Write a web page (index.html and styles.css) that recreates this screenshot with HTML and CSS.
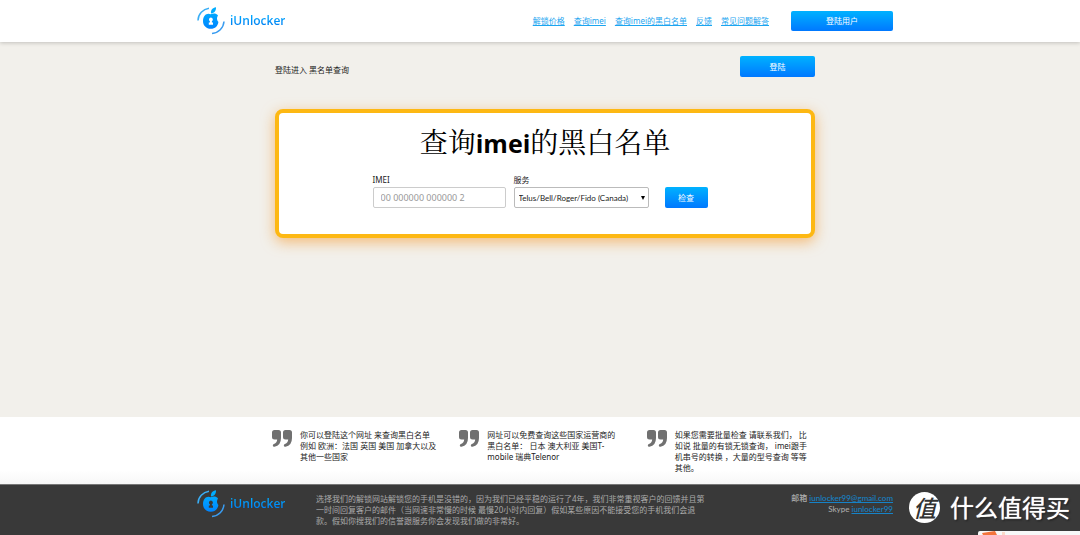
FILE: index.html
```html
<!DOCTYPE html>
<html lang="zh-CN">
<head>
<meta charset="utf-8">
<title>iUnlocker</title>
<link rel="stylesheet" href="styles.css">
</head>
<body>
<svg class="defs" aria-hidden="true">
  <defs>
    <linearGradient id="blue" x1="0" y1="0" x2="0" y2="1">
      <stop offset="0" stop-color="#00a8ff"/><stop offset="1" stop-color="#0084ff"/>
    </linearGradient>
    <symbol id="apple" viewBox="0 0 28 28">
      <path d="M1 13.500C1 7 6 2 12 1.200" fill="none" stroke="#3aaef5" stroke-width="1.500"/>
      <path d="M27 14.500C26.500 21 21.500 26 15 26.500" fill="none" stroke="#3a9cf0" stroke-width="1.500"/>
      <path d="M14 6.500C13.500 3 15.500 .6 19 .2C19.200 3.500 17.500 6 14 6.500Z" fill="#00adff"/>
      <path fill="url(#blue)" fill-rule="evenodd" d="M13.800 7.300C16.500 6 19.200 6.400 21 8.400C19.600 10.400 19.600 13 21.400 15C20.800 19 18.200 21.800 13.800 21.800C9.300 21.800 6 18.600 6 14C6 8.300 10 5.400 13.800 7.300ZM13.900 10.600A2 2 0 0 0 12.900 14.300V15.600H11.800V17.800H16V15.600H14.900V14.300A2 2 0 0 0 13.900 10.600Z"/>
    </symbol>
    <symbol id="quote" viewBox="0 0 20 17">
      <path d="M2.500 0H6.500Q9 0 9 2.500V8Q9 15.500 2.500 16.800Q.8 17 .8 15.400Q.8 14.200 2 13.900Q5 13 5.200 9.500H2.500Q0 9.500 0 7V2.500Q0 0 2.500 0Z"/>
      <path d="M13.500 0H17.500Q20 0 20 2.500V8Q20 15.500 13.500 16.800Q11.800 17 11.800 15.400Q11.800 14.200 13 13.900Q16 13 16.200 9.500H13.500Q11 9.500 11 7V2.500Q11 0 13.500 0Z"/>
    </symbol>
  </defs>
</svg>

<header class="header">
  <div class="wrap header-row">
    <a class="logo" href="#"><svg class="logo-mark" aria-hidden="true"><use href="#apple"/></svg><span class="logo-name">iUnlocker</span></a>
    <nav class="nav">
      <a href="#">解锁价格</a>
      <a href="#">查询imei</a>
      <a href="#">查询imei的黑白名单</a>
      <a href="#">反馈</a>
      <a href="#">常见问题解答</a>
    </nav>
    <button class="button button-user" type="button">登陆用户</button>
  </div>
</header>

<main class="main">
  <div class="content">
    <div class="login-row">
      <p>登陆进入 黑名单查询</p>
      <button class="button button-login" type="button">登陆</button>
    </div>
    <section class="panel">
      <h1 class="title">查询<strong>imei</strong>的黑白名单</h1>
      <form class="form">
        <div class="field field-imei">
          <label for="imei">IMEI</label>
          <input id="imei" type="text" placeholder="00 000000 000000 2">
        </div>
        <div class="field field-service">
          <label for="service">服务</label>
          <div class="select-box">
            <select id="service"><option>Telus/Bell/Roger/Fido (Canada)</option></select>
          </div>
        </div>
        <button class="button button-check" type="button">检查</button>
      </form>
    </section>
  </div>
</main>

<section class="quotes">
  <div class="quotes-row">
    <div class="quote"><svg class="quote-mark" aria-hidden="true"><use href="#quote"/></svg><p>你可以登陆这个网址 来查询黑白名单<br>例如 欧洲：法国 英国 美国 加拿大以及<br>其他一些国家</p></div>
    <div class="quote"><svg class="quote-mark" aria-hidden="true"><use href="#quote"/></svg><p>网址可以免费查询这些国家运营商的<br>黑白名单： 日本 澳大利亚 美国T-<br>mobile 瑞典Telenor</p></div>
    <div class="quote"><svg class="quote-mark" aria-hidden="true"><use href="#quote"/></svg><p>如果您需要批量检查 请联系我们， 比<br>如说 批量的有锁无锁查询， imei跟手<br>机串号的转换 ，大量的型号查询 等等<br>其他。</p></div>
  </div>
</section>

<footer class="footer">
  <div class="wrap footer-row">
    <a class="logo" href="#"><svg class="logo-mark" aria-hidden="true"><use href="#apple"/></svg><span class="logo-name">iUnlocker</span></a>
    <p class="about">选择我们的解锁网站解锁您的手机是没错的，因为我们已经平稳的运行了4年，我们非常重视客户的回馈并且第<br>一时间回复客户的邮件（当网速非常慢的时候 最慢20小时内回复）假如某些原因不能接受您的手机我们会退<br>款。假如你搜我们的信誉跟服务你会发现我们做的非常好。</p>
    <address class="contact">邮箱 <a href="#">iunlocker99@gmail.com</a><br>Skype <a href="#">iunlocker99</a></address>
  </div>
  <div class="watermark"><span class="seal">值</span><span>什么值得买</span></div>
  <svg class="corner" viewBox="0 0 102 4" aria-hidden="true">
    <path d="M0 4V2Q0 0 2 0H102V4Z" fill="#f7f8f8"/>
    <path d="M4 2L17 0L19 4H5Z" fill="#f4743b"/>
    <path d="M24 1H27V4H24Z" fill="#fbd9c8"/>
  </svg>
</footer>
</body>
</html>
```
FILE: styles.css
```css
* { box-sizing: border-box; }

body {
  display: flex;
  flex-direction: column;
  min-height: 100vh;
  margin: 0;
  overflow-x: hidden;
  background: #f2f0eb;
  color: #222;
  font: 8px/11px "Noto Sans", "Noto Sans CJK SC", sans-serif;
}

p, h1 { margin: 0; }
.defs { position: absolute; width: 0; height: 0; }

.wrap, .content { width: 100%; margin: 0 auto; }
.wrap { max-width: 696px; }

.header, .main, .quotes, .footer { padding-left: 10px; }

.header {
  background: #fff;
  box-shadow: 0 1px 4px rgba(0, 0, 0, .2);
  z-index: 1;
}
.header-row { display: flex; align-items: center; height: 42px; padding-bottom: 1px; }

.logo {
  display: flex;
  align-items: center;
  gap: 5px;
  text-decoration: none;
  color: #0d8ff5;
}
.logo-mark { width: 28px; height: 28px; }
.logo-name {
  width: 55px;
  font: 600 12px/18px "Open Sans", "Noto Sans", sans-serif;
  background: linear-gradient(#00a8ff 20%, #0078f0 85%);
  background-clip: text;
  color: transparent;
}

.nav { display: flex; gap: 9px; margin-left: auto; }
.nav a { color: #1ba5f0; }

.button {
  padding: 0;
  border: 0;
  border-radius: 2px;
  background: linear-gradient(#00b2ff, #0078ff);
  color: #fff;
  font: inherit;
}
.button-user { width: 102px; height: 20px; margin-left: 22px; }
.button-login { width: 75px; height: 21px; }
.button-check { width: 43px; height: 21px; margin-left: 8px; }

.main { flex: 1; }
.content { max-width: 540px; }
.login-row {
  display: flex;
  justify-content: space-between;
  align-items: center;
  padding-top: 14px;
}
.login-row p { padding-top: 5px; }

.panel {
  margin-top: 32px;
  padding: 9px 22px 26px 12px;
  border: 4px solid #fdb813;
  border-radius: 8px;
  background: #fff;
  box-shadow: 0 4px 14px rgba(245, 150, 40, .6);
}
.title {
  padding-left: 10px;
  color: #000;
  font: 400 28px/38px "Noto Serif CJK SC", "Noto Sans CJK SC", sans-serif;
  text-align: center;
}
.title strong { font-family: "Open Sans", "Noto Sans", sans-serif; font-size: 25px; font-weight: 700; }

.form {
  display: flex;
  justify-content: center;
  align-items: flex-end;
  gap: 8px;
  margin-top: 12px;
}
.field { display: flex; flex-direction: column; gap: 2px; }
.field-imei { width: 133px; }
.field-service { width: 135px; }
.field input, .field select {
  display: block;
  width: 100%;
  height: 21px;
  border: 1px solid #ccc;
  border-radius: 2px;
  background: #fff;
  color: #222;
  font-family: inherit;
}
.field input { padding: 0 7px; font-size: 9px; }
.field input::placeholder { color: #999; }
.field select { padding: 0 4px; border-color: #bbb; font: 8px "Lato", sans-serif; appearance: none; }
.select-box { position: relative; }
.select-box::after {
  content: "";
  position: absolute;
  top: 9px;
  right: 4px;
  border: 2px solid transparent;
  border-top: 4px solid #000;
  border-bottom: 0;
}

.quotes { background: linear-gradient(#fff 80%, #f7f7f7); }
.quotes-row {
  display: grid;
  grid-template-columns: repeat(3, 1fr);
  gap: 22px;
  width: 100%;
  max-width: 540px;
  min-height: 67px;
  margin: 0 auto;
  padding: 12px 0 11px;
}
.quote { display: flex; gap: 8px; margin-left: -3px; }
.quote p { white-space: nowrap; }
.quote-mark { flex: none; width: 20px; height: 17px; margin-top: 1px; fill: #707070; }

.footer {
  position: relative;
  border-top: 1px solid #777;
  background: #393939;
  color: #aaa;
}
.footer-row { display: flex; align-items: flex-start; min-height: 50px; padding-top: 5px; }
.about { margin: 3px 0 0 31px; white-space: nowrap; }
.contact {
  margin: 3px 0 0 auto;
  font-family: "Lato", "Noto Sans CJK SC", sans-serif;
  font-style: normal;
  font-weight: 500;
  text-align: right;
  white-space: nowrap;
}
.contact a { color: #1683c8; }

.watermark {
  position: absolute;
  top: 6px;
  right: 10px;
  display: flex;
  align-items: center;
  gap: 10px;
  color: #fff;
  font: 24px/32px "Noto Sans CJK SC", sans-serif;
  text-shadow: 0 0 1px #fff, 1px 1px 2px #111;
}
.seal {
  width: 31px;
  height: 31px;
  border-radius: 50%;
  background: #fff;
  color: #333;
  font-size: 23px;
  font-style: italic;
  font-weight: 500;
  line-height: 30px;
  text-align: center;
  text-shadow: none;
}
.corner { position: absolute; right: 0; bottom: 0; width: 102px; height: 4px; }
```
